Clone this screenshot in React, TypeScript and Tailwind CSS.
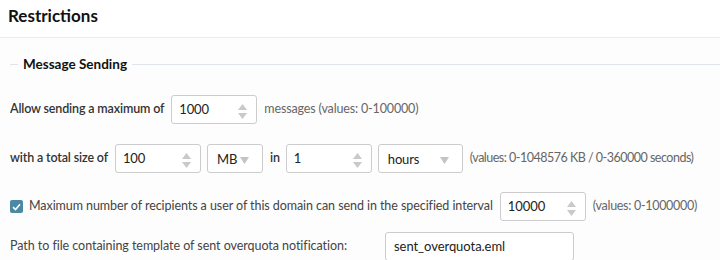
import React from 'react';

const FONT = "font-['Lato','Liberation_Sans',sans-serif]";

const SpinInput: React.FC<{ value: string; width?: string }> = ({ value, width = 'w-[86px]' }) => (
  <div className={`relative ${width} h-[29px] shrink-0 rounded-[3px] border border-[#cccccc] bg-white`}>
    <div className="flex h-full items-center pl-[7px] text-[13px] text-[#222]">{value}</div>
    {/* spinner arrows */}
    <div className="absolute right-[9px] top-[8px] flex flex-col gap-[3px]">
      <svg width="9" height="6" viewBox="0 0 9 6">
        <path d="M4.5 0 L9 6 L0 6 Z" fill="#c9c9c9" />
      </svg>
      <svg width="9" height="6" viewBox="0 0 9 6">
        <path d="M0 0 L9 0 L4.5 6 Z" fill="#c9c9c9" />
      </svg>
    </div>
  </div>
);

const Select: React.FC<{ value: string; width: string }> = ({ value, width }) => (
  <div className={`relative ${width} h-[29px] shrink-0 rounded-[3px] border border-[#cccccc] bg-white`}>
    <div className="flex h-full items-center pl-[9px] pt-[2px] text-[13px] text-[#222]">{value}</div>
    <svg className="absolute right-[13px] top-[12px]" width="9" height="7" viewBox="0 0 9 7">
      <path d="M0 0 L9 0 L4.5 7 Z" fill="#c4c4c4" />
    </svg>
  </div>
);

export default function App() {
  return (
    <div className={`w-[720px] h-[260px] overflow-hidden bg-white ${FONT} whitespace-nowrap`}>
      {/* Header */}
      <div className="h-[38px] border-b border-[#ebebeb] pl-[8px] pt-[4px]">
        <h1 className="text-[17px] font-bold leading-[24px] text-[#111]">Restrictions</h1>
      </div>

      <div className="bg-[#fdfdfd]">
        {/* Legend */}
        <div className="flex items-center pt-[16px] pl-[10px]">
          <div className="h-px w-[8px] bg-[#dfe5ea]" />
          <span className="px-[5px] text-[13.5px] font-bold leading-[20px] text-[#111]">Message Sending</span>
          <div className="h-px flex-1 bg-[#dfe5ea]" />
        </div>

        <div className="flex flex-col pl-[10px] pt-[21px] text-[12.5px] tracking-[-0.15px]">
          {/* Row 1 */}
          <div className="flex items-center gap-[7px]">
            <span className="font-semibold text-[#333]">Allow sending a maximum of</span>
            <SpinInput value="1000" />
            <span className="text-[#666]">messages (values: 0-100000)</span>
          </div>

          {/* Row 2 */}
          <div className="mt-[20px] flex items-center">
            <span className="font-semibold text-[#333]">with a total size of</span>
            <div className="ml-[7px]">
              <SpinInput value="100" />
            </div>
            <div className="ml-[6px]">
              <Select value="MB" width="w-[56px]" />
            </div>
            <span className="ml-[7px] font-semibold text-[#333]">in</span>
            <div className="ml-[6px]">
              <SpinInput value="1" />
            </div>
            <div className="ml-[6px]">
              <Select value="hours" width="w-[85px]" />
            </div>
            <span className="ml-[7px] tracking-[-0.5px] text-[#666]">(values: 0-1048576 KB / 0-360000 seconds)</span>
          </div>

          {/* Row 3 */}
          <div className="mt-[19px] flex items-center tracking-[-0.07px]">
            <div className="flex h-[13px] w-[13px] shrink-0 items-center justify-center rounded-[2px] bg-[#4a88a3]">
              <svg width="9" height="8" viewBox="0 0 9 8">
                <path d="M1 4.2 L3.5 6.5 L8 1.2" fill="none" stroke="#fff" strokeWidth="1.6" />
              </svg>
            </div>
            <span className="ml-[6px] text-[#444]">
              Maximum number of recipients a user of this domain can send in the specified interval
            </span>
            <div className="ml-[7px]">
              <SpinInput value="10000" />
            </div>
            <span className="ml-[7px] tracking-[-0.3px] text-[#666]">(values: 0-1000000)</span>
          </div>

          {/* Row 4 */}
          <div className="mt-[11px] flex items-center tracking-[-0.05px]">
            <span className="w-[375px] shrink-0 text-[#444]">
              Path to file containing template of sent overquota notification:
            </span>
            <div className="flex h-[29px] w-[189px] items-center rounded-[3px] border border-[#cccccc] bg-white pl-[8px] text-[13px] text-[#222]">
              sent_overquota.eml
            </div>
          </div>
        </div>
      </div>
    </div>
  );
}
